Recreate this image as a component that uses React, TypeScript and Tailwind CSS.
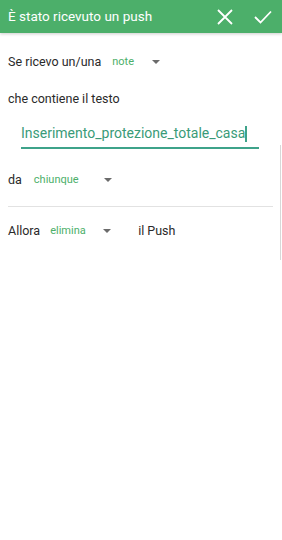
import React from 'react';

const Caret = () => (
  <svg width="8" height="4" viewBox="0 0 8 4" className="block">
    <path d="M0 0 L8 0 L4 4 Z" fill="#6b6b6b" />
  </svg>
);

const Dropdown = ({ label, width }: { label: string; width: string }) => (
  <div className={`flex items-center justify-between ${width}`}>
    <span className="text-[11px] text-[#4caf6a]">{label}</span>
    <Caret />
  </div>
);

const App = () => {
  return (
    <div className="w-[282px] h-[540px] bg-white relative overflow-hidden" style={{ fontFamily: 'Roboto, "Noto Sans", sans-serif' }}>
      <div className="h-[33px] bg-[#4caf6a] flex items-center pl-[8px] pr-[10px] shadow-[0_1px_3px_rgba(0,0,0,0.2)] relative z-10">
        <span className="text-white text-[13.5px] flex-1 pl-0">È stato ricevuto un push</span>
        <svg width="16" height="16" viewBox="0 0 16 16" className="mr-[21px]">
          <path d="M1 1 L15 15 M15 1 L1 15" stroke="white" strokeWidth="1.8" fill="none" />
        </svg>
        <svg width="18" height="14" viewBox="0 0 18 14">
          <path d="M1 7 L6.5 12.5 L17 1.5" stroke="white" strokeWidth="1.8" fill="none" />
        </svg>
      </div>

      <div className="px-2 text-[12.5px] text-[#2a2a2a]">
        <div className="flex items-center h-[20px] mt-[19px]">
          <span>Se ricevo un/una</span>
          <div className="ml-[11px]">
            <Dropdown label="note" width="w-[48px]" />
          </div>
        </div>

        <div className="h-[20px] flex items-center mt-[17px]">che contiene il testo</div>

        <div className="ml-[13px] mr-[15px] mt-[14px] border-b-2 border-[#3ea38a] pb-[3px]">
          <span className="text-[14px] text-[#3a9b78]">Inserimento_protezione_totale_casa</span>
          <span className="inline-block w-[1.5px] h-[16px] bg-[#3ea38a] align-middle -mt-[2px]" />
        </div>

        <div className="flex items-center h-[20px] mt-[21px]">
          <span>da</span>
          <div className="ml-[12px]">
            <Dropdown label="chiunque" width="w-[78px]" />
          </div>
        </div>

        <div className="h-px bg-[#e2e2e2] mt-[16px] mr-[1px]" />

        <div className="flex items-center h-[20px] mt-[14px]">
          <span>Allora</span>
          <div className="ml-[10px]">
            <Dropdown label="elimina" width="w-[61px]" />
          </div>
          <span className="ml-[27px]">il Push</span>
        </div>
      </div>

      <div className="absolute right-[1px] top-[145px] w-[1.5px] h-[115px] bg-[#d8d8d8]" />
    </div>
  );
};

export default App;
